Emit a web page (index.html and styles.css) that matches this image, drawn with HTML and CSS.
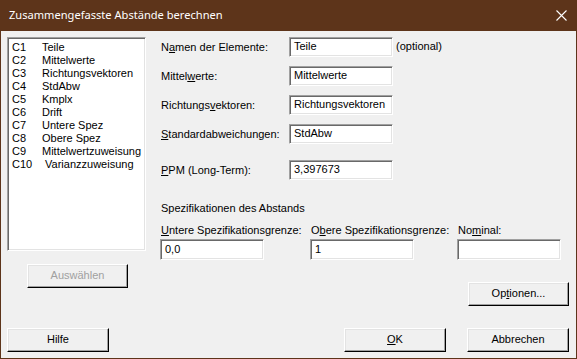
FILE: index.html
```html
<!DOCTYPE html>
<html lang="de">
<head>
<meta charset="utf-8">
<title>Zusammengefasste Abstände berechnen</title>
<link rel="stylesheet" href="styles.css">
</head>
<body>
<div class="window">
  <div class="titlebar">
    <span class="title">Zusammengefasste Abstände berechnen</span>
    <svg class="close" width="11" height="11" viewBox="0 0 11 11"><path d="M0.5 0.5 L10.5 10.5 M10.5 0.5 L0.5 10.5" stroke="#fff" stroke-width="1.1" fill="none"/></svg>
  </div>
  <div class="content">
    <div class="top">
      <div class="leftcol">
        <div class="listbox">
          <div class="item"><span class="code">C1</span><span>Teile</span></div>
          <div class="item"><span class="code">C2</span><span>Mittelwerte</span></div>
          <div class="item"><span class="code">C3</span><span>Richtungsvektoren</span></div>
          <div class="item"><span class="code">C4</span><span>StdAbw</span></div>
          <div class="item"><span class="code">C5</span><span>Kmplx</span></div>
          <div class="item"><span class="code">C6</span><span>Drift</span></div>
          <div class="item"><span class="code">C7</span><span>Untere Spez</span></div>
          <div class="item"><span class="code">C8</span><span>Obere Spez</span></div>
          <div class="item"><span class="code">C9</span><span>Mittelwertzuweisung</span></div>
          <div class="item"><span class="code">C10</span><span>&nbsp;Varianzzuweisung</span></div>
        </div>
        <div class="btn disabled select">Auswählen</div>
      </div>
      <div class="rightcol">
        <div class="form">
          <div class="label">N<u>a</u>men der Elemente:</div>
          <div class="field">Teile</div>
          <div class="note">(optional)</div>
          <div class="label">Mittel<u>w</u>erte:</div>
          <div class="field">Mittelwerte</div>
          <div></div>
          <div class="label">Richtungs<u>v</u>ektoren:</div>
          <div class="field">Richtungsvektoren</div>
          <div></div>
          <div class="label"><u>S</u>tandardabweichungen:</div>
          <div class="field">StdAbw</div>
          <div></div>
          <div class="label ppm"><u>P</u>PM (Long-Term):</div>
          <div class="field ppm">3,397673</div>
          <div class="ppm"></div>
        </div>
        <div class="heading">Spezifikationen des Abstands</div>
        <div class="spec">
          <div class="speclabel"><u>U</u>ntere Spezifikationsgrenze:</div>
          <div class="speclabel">O<u>b</u>ere Spezifikationsgrenze:</div>
          <div class="speclabel">No<u>m</u>inal:</div>
          <div class="field specfield">0,0</div>
          <div class="field specfield">1</div>
          <div class="field specfield"></div>
        </div>
        <div class="optrow">
          <div class="btn">Op<u>t</u>ionen...</div>
        </div>
      </div>
    </div>
    <div class="bottom">
      <div class="btn">Hilfe</div>
      <div class="actions">
        <div class="btn"><u>O</u>K</div>
        <div class="btn">Abbrechen</div>
      </div>
    </div>
  </div>
</div>
</body>
</html>
```

FILE: styles.css
```css
* { box-sizing: border-box; }
html, body { margin: 0; padding: 0; background: #f0f0f0; }
body { font-family: "Liberation Sans", Arial, sans-serif; font-size: 11px; color: #000; }

.window {
  width: 577px;
  height: 359px;
  border: 1px solid #5d341a;
  border-top: none;
  background: #f0f0f0;
  display: flex;
  flex-direction: column;
}

.titlebar {
  height: 31px;
  margin: 0 -1px;
  background: #5d341a;
  display: flex;
  align-items: center;
  justify-content: space-between;
  padding: 0 10px 0 9px;
  flex: none;
}
.title {
  color: #fff;
  font-family: "Noto Sans", "Liberation Sans", sans-serif;
  font-size: 11.1px;
  line-height: 16px;
  padding-bottom: 1px;
}
.close { display: block; margin-bottom: 1px; }

.content {
  flex: 1;
  display: flex;
  flex-direction: column;
  padding: 6px 7px 6px 6px;
}

.top { display: flex; gap: 14px; }

.leftcol { width: 139px; display: flex; flex-direction: column; }

.listbox {
  height: 214px;
  background: #fff;
  border: 1px solid #a0a0a0;
  border-right-color: #fff;
  border-bottom-color: #fff;
  box-shadow: inset 1px 1px 0 #696969, inset -1px -1px 0 #e3e3e3;
  padding: 3px 0 0 4px;
}
.item { display: flex; line-height: 13px; white-space: nowrap; }
.code { width: 30px; flex: none; }

.btn {
  height: 24px;
  width: 101px;
  display: flex;
  align-items: center;
  justify-content: center;
  background: #f0f0f0;
  border: 1px solid #fff;
  border-right-color: #000;
  border-bottom-color: #000;
  box-shadow: inset -1px -1px 0 #a0a0a0, inset 1px 1px 0 #e3e3e3;
  line-height: 13px;
  padding-bottom: 1px;
}
.btn.disabled { color: #a0a0a0; }
.select { margin: 13px 0 0 20px; }

.rightcol { flex: 1; display: flex; flex-direction: column; }

.form {
  display: grid;
  grid-template-columns: 129px 104px auto;
  row-gap: 9px;
  align-items: start;
}
.label { padding: 4px 0 0 1px; line-height: 13px; white-space: nowrap; }
.note { padding: 3px 0 0 3px; line-height: 13px; }
.ppm { margin-top: 7px; }

.field {
  height: 20px;
  width: 104px;
  background: #fff;
  border: 1px solid #a0a0a0;
  border-right-color: #fff;
  border-bottom-color: #fff;
  box-shadow: inset 1px 1px 0 #696969, inset -1px -1px 0 #e3e3e3;
  padding: 2px 0 0 4px;
  line-height: 13px;
  white-space: nowrap;
  overflow: hidden;
}

.heading { margin-top: 22px; padding-left: 1px; line-height: 13px; }

.spec {
  display: grid;
  grid-template-columns: 150px 147px 104px;
  margin-top: 9px;
  row-gap: 2px;
}
.speclabel { padding-left: 1px; line-height: 13px; white-space: nowrap; }
.specfield { height: 21px; padding-top: 3px; }

.optrow { display: flex; justify-content: flex-end; margin-top: 22px; }

.bottom {
  margin-top: auto;
  display: flex;
  justify-content: space-between;
  align-items: flex-end;
}
.bottom .btn { width: 102px; }
.actions { display: flex; gap: 21px; }
```
